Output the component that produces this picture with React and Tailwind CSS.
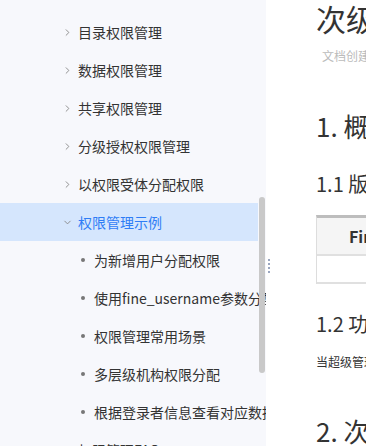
import React from 'react';
import { ChevronRight, ChevronDown } from 'lucide-react';

const font = { fontFamily: '"Noto Sans CJK SC", "Noto Sans", sans-serif' };

const topItems = ['目录权限管理', '数据权限管理', '共享权限管理', '分级授权权限管理', '以权限受体分配权限'];
const subItems = ['为新增用户分配权限', '使用fine_username参数分配权限', '权限管理常用场景', '多层级机构权限分配', '根据登录者信息查看对应数据'];

const Sidebar = () => (
  <aside className="relative w-[266px] h-[446px] shrink-0 overflow-hidden bg-[#f7f8fc]">
    <ul className="pt-[13px] pr-[8px]">
      {topItems.map((t) => (
        <li key={t} className="flex items-center h-[38px] pl-[62px] text-[14px] text-[#333] whitespace-nowrap">
          <ChevronRight className="w-[11px] h-[11px] text-[#888] mr-[5px]" strokeWidth={2} />
          {t}
        </li>
      ))}
      <li className="flex items-center h-[38px] pl-[62px] text-[14px] text-[#2f7df6] bg-[#d5e6fd] whitespace-nowrap">
        <ChevronDown className="w-[11px] h-[11px] text-[#888] mr-[5px]" strokeWidth={2} />
        权限管理示例
      </li>
      {subItems.map((t) => (
        <li key={t} className="flex items-center h-[38px] pl-[81px] text-[14px] text-[#333] whitespace-nowrap">
          <span className="w-[4px] h-[4px] rounded-full bg-[#777] mr-[9px] shrink-0" />
          {t}
        </li>
      ))}
      <li className="flex items-center h-[38px] pl-[62px] text-[14px] text-[#333] whitespace-nowrap">
        <ChevronRight className="w-[11px] h-[11px] text-[#888] mr-[5px]" strokeWidth={2} />
        权限管理FAQ
      </li>
    </ul>
    {/* scrollbar thumb */}
    <div className="absolute right-[1px] top-[197px] w-[6px] h-[176px] rounded-[3px] bg-[#c9c9c9]" />
  </aside>
);

const Content = () => (
  <main className="relative flex-1 h-[446px] overflow-hidden bg-white pl-[50px] whitespace-nowrap text-[#333]">
    {/* drag handle */}
    <div className="absolute left-[2px] top-[259px] flex flex-col gap-[2px]">
      {[0, 1, 2, 3].map((i) => (
        <span key={i} className="w-[2px] h-[2px] bg-[#9aa6c0]" />
      ))}
    </div>
    <h1 className="text-[30px] leading-[34px] pt-[1px]">次级管理员权限管理</h1>
    <p className="mt-[13px] ml-[6px] text-[12px] leading-[16px] text-[#bbb]">文档创建者：</p>
    <h2 className="mt-[47px] text-[26px] leading-[30px]">1. 概述</h2>
    <h3 className="mt-[31px] text-[20px] leading-[24px]">1.1 版本</h3>
    <div className="mt-[19px] w-[300px] border-t-[3px] border-t-[#bdbdbd] border-l border-l-[#ddd]">
      <div className="h-[36px] bg-[#f5f5f5] flex items-center pl-[32px] text-[16px] font-bold">FineReport 版本</div>
      <div className="h-[30px] border-t-2 border-b-2 border-[#e0e0e0]" />
    </div>
    <h3 className="mt-[28px] text-[20px] leading-[24px]">1.2 功能简介</h3>
    <p className="mt-[18px] text-[12px] leading-[16px]">当超级管理员</p>
    <h2 className="mt-[46px] text-[26px] leading-[30px]">2. 次级管理员</h2>
  </main>
);

export default function App() {
  return (
    <div className="flex w-[366px] h-[446px] overflow-hidden" style={font}>
      <Sidebar />
      <Content />
    </div>
  );
}
